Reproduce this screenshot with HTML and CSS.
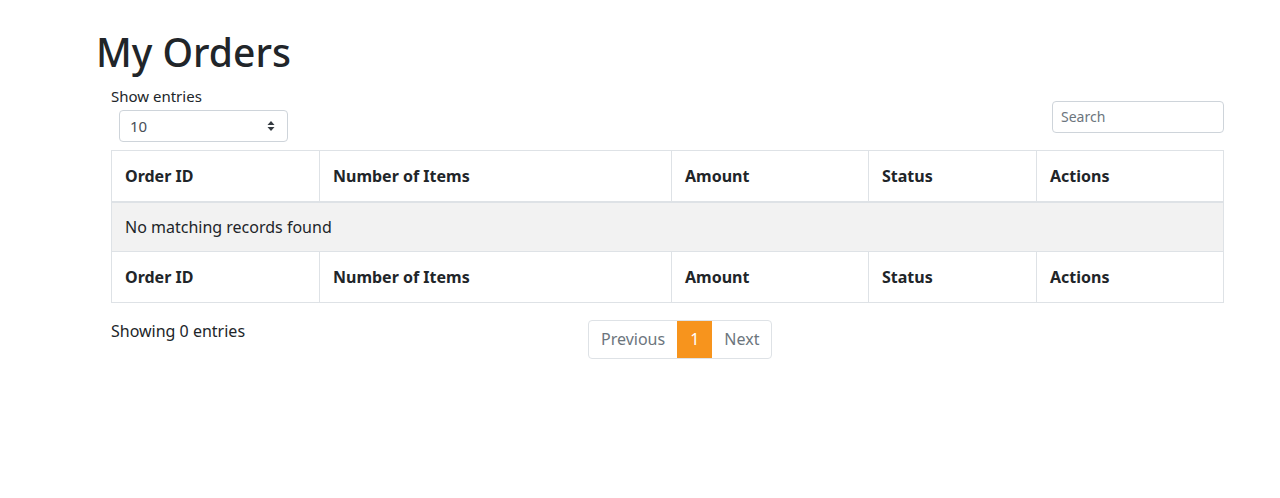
FILE: index.html
```html
<!DOCTYPE html>
<html>
<head>
<meta charset="utf-8">
<link rel="stylesheet" href="styles.css">
</head>
<body>
<main class="page">
  <h1 class="title">My Orders</h1>
  <div class="wrap">
    <div class="toolbar">
      <div class="length">
        <label class="length-label">Show entries</label>
        <div class="select">
          <span>10</span>
          <svg class="caret" width="8" height="12" viewBox="0 0 8 12"><path d="M4 1 L7.5 5 H0.5 Z M4 11 L7.5 7 H0.5 Z" fill="#343a40"/></svg>
        </div>
      </div>
      <div class="search">Search</div>
    </div>
    <table class="orders">
      <thead>
        <tr><th class="c1">Order ID</th><th class="c2">Number of Items</th><th class="c3">Amount</th><th class="c4">Status</th><th class="c5">Actions</th></tr>
      </thead>
      <tbody>
        <tr class="empty"><td colspan="5">No matching records found</td></tr>
      </tbody>
      <tfoot>
        <tr><th>Order ID</th><th>Number of Items</th><th>Amount</th><th>Status</th><th>Actions</th></tr>
      </tfoot>
    </table>
    <div class="footer">
      <div class="info">Showing 0 entries</div>
      <div class="pager">
        <span class="pg">Previous</span>
        <span class="pg active">1</span>
        <span class="pg">Next</span>
      </div>
    </div>
  </div>
</main>
</body>
</html>
```
FILE: styles.css
```css
* { box-sizing: border-box; }
body {
  margin: 0;
  font-family: "Noto Sans", "Open Sans", sans-serif;
  color: #212529;
  background: #fff;
  font-size: 16px;
}
.page {
  padding: 26px 56px 0 96px;
}
.title {
  margin: 0;
  font-size: 39px;
  font-weight: 500;
  line-height: 52px;
}
.wrap {
  padding-left: 15px;
}
.toolbar {
  display: flex;
  justify-content: space-between;
  align-items: flex-start;
  margin-top: 8px;
}
.length-label {
  display: block;
  font-size: 15px;
  line-height: 20px;
}
.select {
  margin: 4px 0 0 8px;
  width: 169px;
  height: 32px;
  border: 1px solid #ced4da;
  border-radius: 4px;
  display: flex;
  align-items: center;
  justify-content: space-between;
  padding: 0 12px 0 10px;
  font-size: 15px;
  color: #495057;
}
.search {
  margin-top: 15px;
  width: 172px;
  height: 32px;
  border: 1px solid #ced4da;
  border-radius: 4px;
  padding: 0 8px;
  line-height: 30px;
  font-size: 14px;
  color: #6c757d;
}
.orders {
  margin-top: 8px;
  width: 1113px;
  border-collapse: collapse;
  border: 1px solid #dee2e6;
}
.orders th, .orders td {
  border: 1px solid #dee2e6;
  text-align: left;
  padding: 0 13px;
  height: 51px;
  font-size: 16px;
}
.orders th { font-weight: 700; }
.orders thead th { border-bottom-width: 2px; }
.c1 { width: 208px; }
.c2 { width: 352px; }
.c3 { width: 197px; }
.c4 { width: 168px; }
.empty td { background: #f2f2f2; height: 50px; }
.footer {
  display: flex;
  align-items: flex-start;
  width: 1113px;
  margin-top: 17px;
}
.info {
  flex: 0 0 477px;
  font-size: 16px;
  line-height: 22px;
}
.pager {
  display: flex;
  border: 1px solid #dee2e6;
  border-radius: 4px;
  overflow: hidden;
}
.pg {
  height: 37px;
  line-height: 37px;
  padding: 0 12px;
  color: #6c757d;
  font-size: 16px;
}
.pg.active {
  background: #f7941d;
  color: #fff;
  padding: 0 13px;
}
```
